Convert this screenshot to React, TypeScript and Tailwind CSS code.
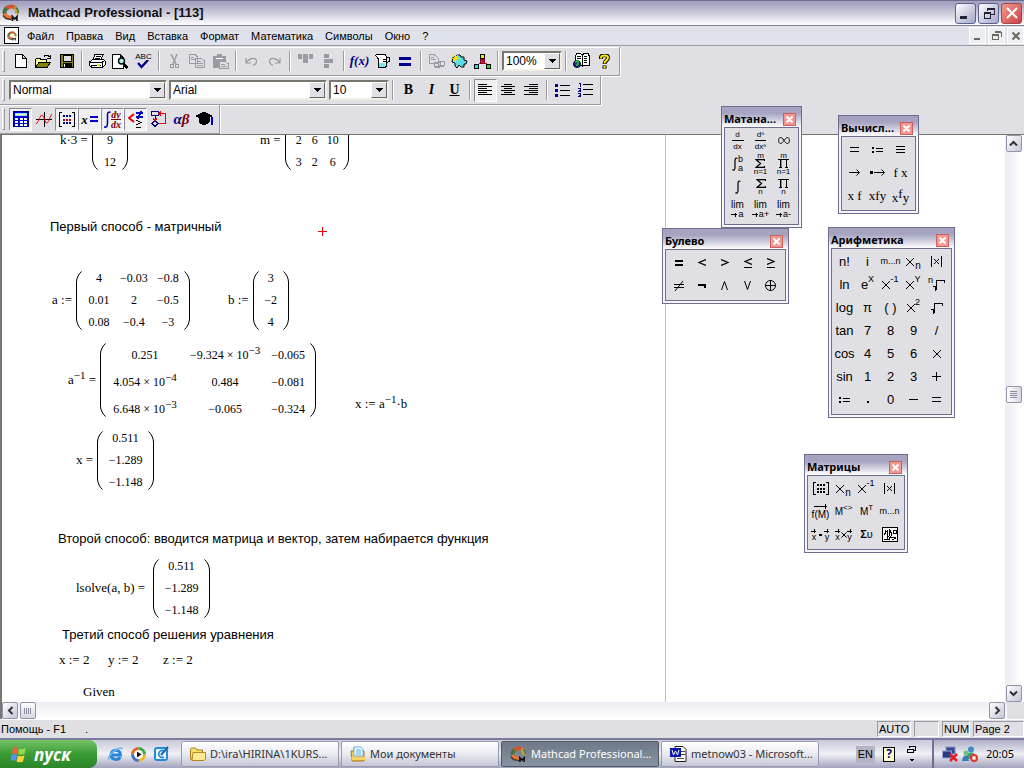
import type { ReactNode } from "react";

const UI = "font-['Noto_Sans','Liberation_Sans',sans-serif]";

function Ico({ children, w = 16, h = 16 }: { children: ReactNode; w?: number; h?: number }) {
  return (
    <svg width={w} height={h} viewBox={`0 0 ${w} ${h}`} fill="none" stroke="#000" shapeRendering="crispEdges" aria-hidden="true">
      {children}
    </svg>
  );
}

function Logo({ size = 18 }: { size?: number }) {
  return (
    <svg width={size} height={size} viewBox="0 0 18 18" fill="none" aria-hidden="true">
      <path d="M3.5 11C1.500 8 3 4.500 6 3.500" stroke="#46733a" strokeWidth="4" />
      <path d="M5 4.500C7 2 11 2 13 4" stroke="#d4552c" strokeWidth="4" />
      <path d="M12 3.500C15 5 15.500 8 14.500 10" stroke="#c9a24a" strokeWidth="4" />
      <path d="M13.500 3.500C16 5 16.500 7 16 9" stroke="#3f7d3c" strokeWidth="1.5" />
      <path d="M2.500 9.500C4 12.500 7 13.500 10 13" stroke="#f0703c" strokeWidth="3.5" />
      <path d="M1 11.500L4 14.500L9.500 15.500" stroke="#4a3323" strokeWidth="1.5" />
      <path d="M10.500 17V12.500L12.700 15L15 12.500V17" stroke="#111" strokeWidth="1.7" />
    </svg>
  );
}

function Tool({ label, on, children }: { label: string; on?: boolean; children: ReactNode }) {
  return (
    <button
      aria-label={label}
      className={
        on
          ? "flex h-[23px] w-[23px] items-center justify-center border border-t-[#8b8a92] border-r-white border-b-white border-l-[#8b8a92] bg-[#f0eff2]"
          : "flex h-[23px] w-[23px] items-center justify-center"
      }
    >
      {children}
    </button>
  );
}

function Sep() {
  return (
    <div className="flex w-2 justify-center">
      <div className="h-5 border-r border-l border-r-white border-l-[#9b9aa2]" />
    </div>
  );
}

function Bar({ children }: { children: ReactNode }) {
  return (
    <div className="flex h-[29px] items-center self-start border-r border-b border-[#9b9aa2] pr-[3px] pl-[2px] shadow-[1px_1px_0_#fff,inset_0_1px_0_#fff]">
      <div className="mr-1 h-[22px] w-[3px] border border-t-white border-r-[#9b9aa2] border-b-[#9b9aa2] border-l-white" />
      {children}
    </div>
  );
}

function Combo({ label, value, width }: { label: string; value: string; width: string }) {
  return (
    <div className={`relative h-[20px] ${width}`}>
      <select
        aria-label={label}
        className="h-full w-full appearance-none border-2 border-t-[#77766f] border-r-[#f1efe2] border-b-[#f1efe2] border-l-[#77766f] bg-white pl-0.5 font-['Liberation_Sans',sans-serif] text-xs leading-4"
      >
        <option>{value}</option>
      </select>
      <span className="pointer-events-none absolute top-[2px] right-[2px] flex h-4 w-4 items-center justify-center border border-t-white border-r-[#66656d] border-b-[#66656d] border-l-white bg-[#e0dfe3]">
        <svg width="7" height="4" shapeRendering="crispEdges"><path d="M0 0H7L3.5 4Z" /></svg>
      </span>
    </div>
  );
}

function Paren({ h, right }: { h: number; right?: boolean }) {
  return (
    <svg width="6" height={h} viewBox={`0 0 6 ${h}`} fill="none" stroke="#000" className={right ? "shrink-0 -scale-x-100" : "shrink-0"}>
      <path d={`M5.5 .5C3 2.5 .5 7 .5 11V${h - 11}C.5 ${h - 7} 3 ${h - 2.5} 5.5 ${h - 0.5}`} />
    </svg>
  );
}

function Matrix({ rows, cols, tall }: { rows: ReactNode[][]; cols: string; tall?: boolean }) {
  return (
    <div className="flex items-center text-xs">
      <Paren h={tall ? 74 : 59} />
      <div className={`grid gap-x-2 px-1 text-center ${cols}`}>
        {rows.flat().map((cell, i) => (
          <span key={i} className={tall ? "h-[27px] pt-[6px] leading-[21px]" : "h-[22px] leading-[22px]"}>{cell}</span>
        ))}
      </div>
      <Paren h={tall ? 74 : 59} right />
    </div>
  );
}

function Region({ at, children }: { at: string; children: ReactNode }) {
  return <div className={`absolute flex items-center gap-1 whitespace-pre ${at}`}>{children}</div>;
}

function Exp({ base, children }: { base: string; children: string }) {
  return (
    <span>
      {base}
      <sup className="-top-[5px] text-[11px] leading-none">{children}</sup>
    </span>
  );
}

const column = [["0.511"], ["−1.289"], ["−1.148"]];

function Palette({ title, at, cols, items }: { title: string; at: string; cols: string; items: [string, ReactNode][] }) {
  return (
    <section aria-label={title} className={`absolute border border-[#6d6c91] bg-[#f7f7fa] ${at}`}>
      <div className="flex h-5 items-center justify-between bg-linear-to-b from-[#a5a3c0] from-30% to-white pr-[5px] pl-[2px]">
        <h2 className="pt-1 text-[11px] leading-4 font-bold">{title}</h2>
        <button aria-label="Закрыть" className="mt-1 flex h-[13px] w-[13px] items-center justify-center border border-[#c9605f] bg-[#f39891]">
          <svg width="7" height="7" stroke="#fff" strokeWidth="2"><path d="M.5 .5L6.5 6.5M6.5 .5L.5 6.5" /></svg>
        </button>
      </div>
      <div className="mx-[2px] mb-[2px] border border-[#6d6c91] bg-[#e0dfe3] pt-px pr-[3px] pb-[3px] pl-px">
        <div className={`grid ${cols}`}>
          {items.map(([name, glyph]) => (
            <button key={name} aria-label={name} className="flex h-[23px] w-[23px] items-center justify-center font-['Liberation_Sans',sans-serif] text-[13px] leading-none whitespace-nowrap">
              {glyph}
            </button>
          ))}
        </div>
      </div>
    </section>
  );
}

const X = <Ico w={8} h={8}><path d="M0 0L8 8M8 0L0 8" shapeRendering="auto" /></Ico>;

function Up({ base, children }: { base: ReactNode; children: ReactNode }) {
  return <span className="flex items-center">{base}<span className="mb-2.5 text-[9px]">{children}</span></span>;
}

function Down({ base, children }: { base: ReactNode; children: ReactNode }) {
  return <span className="flex items-center gap-px">{base}<span className="mt-2 text-[10px]">{children}</span></span>;
}

function Stack({ top, children, bottom }: { top?: string; children: ReactNode; bottom?: string }) {
  return (
    <span className="flex flex-col items-center text-[8px] leading-[7px]">
      {top && <span>{top}</span>}
      {children}
      {bottom && <span>{bottom}</span>}
    </span>
  );
}

const sigma = <Ico w={10} h={9}><path d="M9.5 2V.5H1L5.5 4.5L1 8.5H9.5V7" shapeRendering="auto" strokeWidth="1.3" /></Ico>;
const prod = <Ico w={11} h={9}><path d="M0 .5H11M2.5 1V9M8.5 1V9M1 8.5H4M7 8.5H10" /><path d="M3.5 1V8" stroke="#888" /></Ico>;
const integral = <Ico w={6} h={14}><path d="M5.5 1.5C3.5 0 3 2 3 4V10C3 13 2 14 .5 12.5" shapeRendering="auto" strokeWidth="1.2" /></Ico>;
const toArrow = <Ico w={7} h={5}><path d="M0 2.5H6M4.5 .5V4.5" /></Ico>;
const lim = (sign: string) => (
  <span className="flex flex-col items-center text-[10px] leading-[10px]">
    <span>lim</span>
    <span className="flex items-center text-[9px] leading-[9px]">{toArrow}a{sign}</span>
  </span>
);
const root = <Ico w={12} h={12}><path d="M0 7.5H2.5V11.5M3.5 11V1.5H11.5V4" /></Ico>;
const dots = <Ico w={16} h={13}><path d="M3 .5H.5V12.5H3M13 .5H15.5V12.5H13" /><path d="M4 3H12M4 6.500H12M4 10H12" strokeWidth="2" strokeDasharray="2 1" /></Ico>;
const vec = (c: string) => (
  <span className="flex flex-col items-center text-[9px] leading-[8px]"><Ico w={6} h={4}><path d="M0 2.5H5M3.5 0V4" /></Ico>{c}</span>
);
const range = <span className="text-[9px]">m...n</span>;

const calculus: [string, ReactNode][] = [
  ["Производная", <Stack><span className="w-3 border-b border-black pb-0.5">d</span><span className="pt-0.5">dx</span></Stack>],
  ["Производная n", <Stack><span className="border-b border-black px-0.5 pb-0.5">dⁿ</span><span className="pt-0.5">dxⁿ</span></Stack>],
  ["Бесконечность", <Ico w={12} h={7}><path d="M6 3.5C4.5 1 3.5 .5 2.5 .5C0 .5 0 6.5 2.5 6.5C5 6.5 7 .5 9.5 .5C12 .5 12 6.5 9.5 6.5C8 6.5 7 5 6 3.5" shapeRendering="auto" /></Ico>],
  ["Определённый интеграл", <span className="flex items-center">{integral}<span className="flex flex-col text-[9px] leading-[9px]"><span>b</span><span>a</span></span></span>],
  ["Сумма", <Stack top="m" bottom="n=1">{sigma}</Stack>],
  ["Произведение", <Stack top="m" bottom="n=1">{prod}</Stack>],
  ["Интеграл", integral],
  ["Сумма n", <Stack bottom="n">{sigma}</Stack>],
  ["Произведение n", <Stack bottom="n">{prod}</Stack>],
  ["Предел", lim("")],
  ["Предел справа", lim("+")],
  ["Предел слева", lim("-")],
];

const serif = (s: string) => <span className="font-['Liberation_Serif',serif] text-[13px]">{s}</span>;
const assign = <Ico w={11} h={6}><path d="M0 1H2M0 5H2" strokeWidth="2" /><path d="M4 1.5H11M4 4.5H11" /></Ico>;
const arrow = <Ico w={11} h={7}><path d="M0 3.5H10M7.5 .5L10.5 3.5L7.5 6.5" shapeRendering="auto" /></Ico>;
const equal = <Ico w={9} h={5}><path d="M0 .5H9M0 4.5H9" /></Ico>;

const evaluation: [string, ReactNode][] = [
  ["Равно", equal],
  ["Присвоить", assign],
  ["Тождество", <Ico w={9} h={7}><path d="M0 .5H9M0 3.5H9M0 6.5H9" /></Ico>],
  ["Символьно", arrow],
  ["Символьно с ключом", <span className="flex items-center gap-px"><Ico w={3} h={3}><path d="M0 1.5H3" strokeWidth="3" /></Ico>{arrow}</span>],
  ["f x", serif("f x")],
  ["x f", serif("x f")],
  ["x f y", serif("xfy")],
  ["x^f y", <span className="flex font-['Liberation_Serif',serif] text-[13px] leading-none"><span className="pt-1">x</span><span>f</span><span className="pt-1">y</span></span>],
];

const boolean: [string, ReactNode][] = [
  ["Равно", <Ico w={8} h={6}><path d="M0 1H8M0 5H8" strokeWidth="2" /></Ico>],
  ["Меньше", <Ico w={8} h={7}><path d="M8 .5L1 3.5L8 6.5" shapeRendering="auto" strokeWidth="1.2" /></Ico>],
  ["Больше", <Ico w={8} h={7}><path d="M0 .5L7 3.5L0 6.5" shapeRendering="auto" strokeWidth="1.2" /></Ico>],
  ["Не больше", <Ico w={8} h={10}><path d="M8 .5L1 3.5L8 6.5M0 9.5H8" shapeRendering="auto" strokeWidth="1.2" /></Ico>],
  ["Не меньше", <Ico w={8} h={10}><path d="M0 .5L7 3.5L0 6.5M0 9.5H8" shapeRendering="auto" strokeWidth="1.2" /></Ico>],
  ["Не равно", <Ico w={10} h={10}><path d="M0 3.5H10M0 6.5H10M9 0L1 10" shapeRendering="auto" /></Ico>],
  ["Не", <Ico w={8} h={4}><path d="M0 1H8M7 0V4" strokeWidth="2" /></Ico>],
  ["И", <Ico w={7} h={9}><path d="M.5 9L3.5 .5L6.5 9" shapeRendering="auto" /></Ico>],
  ["Или", <Ico w={7} h={9}><path d="M.5 0L3.5 8.5L6.5 0" shapeRendering="auto" /></Ico>],
  ["Исключающее или", <Ico w={11} h={11}><circle cx="5.5" cy="5.5" r="5" shapeRendering="auto" /><path d="M5.5 0V11M0 5.5H11" /></Ico>],
];

const abs = <Ico w={11} h={11}><path d="M.5 0V11M10.5 0V11" /><path d="M3 3L8 8M8 3L3 8" shapeRendering="auto" /></Ico>;

const arithmetic: [string, ReactNode][] = [
  ["n!", "n!"], ["i", "i"], ["m..n", range], ["x n", <Down base={X}>n</Down>], ["|x|", abs],
  ["ln", "ln"], ["e^x", <Up base="e">X</Up>], ["x^-1", <Up base={X}>-1</Up>], ["x^y", <Up base={X}>Y</Up>], ["Корень n", <span className="flex items-center"><span className="mb-2 text-[9px]">n</span>{root}</span>],
  ["log", "log"], ["π", "π"], ["( )", "( )"], ["x^2", <Up base={X}>2</Up>], ["Корень", root],
  ["tan", "tan"], ["7", "7"], ["8", "8"], ["9", "9"], ["/", "/"],
  ["cos", "cos"], ["4", "4"], ["5", "5"], ["6", "6"], ["×", X],
  ["sin", "sin"], ["1", "1"], ["2", "2"], ["3", "3"], ["+", <Ico w={9} h={9}><path d="M0 4.5H9M4.5 0V9" /></Ico>],
  [":=", assign], [".", <Ico w={2} h={6}><path d="M0 5H2" strokeWidth="2" /></Ico>], ["0", "0"], ["−", <Ico w={9} h={2}><path d="M0 .5H9" /></Ico>], ["=", equal],
];

const matrices: [string, ReactNode][] = [
  ["Матрица", dots], ["x n", <Down base={X}>n</Down>], ["x^-1", <Up base={X}>-1</Up>], ["|x|", abs],
  ["Векторизация", <span className="flex flex-col items-center text-[10px] leading-[11px]"><Ico w={14} h={5}><path d="M0 2.5H13M11.5 0V5" /></Ico>f(M)</span>],
  ["Столбец", <span className="flex items-center text-[10px]">M<span className="mb-2 text-[8px]">&lt;&gt;</span></span>],
  ["Транспонировать", <span className="flex items-center text-[10px]">M<span className="mb-2 text-[8px]">T</span></span>],
  ["m..n", range],
  ["Скалярное", <span className="flex items-center gap-0.5">{vec("x")}<Ico w={3} h={2}><path d="M0 1H3" strokeWidth="2" /></Ico>{vec("y")}</span>],
  ["Векторное", <span className="flex items-center">{vec("x")}<Ico w={6} h={6}><path d="M.5 .5L5.500 5.500M5.500 .5L.5 5.500" shapeRendering="auto" /></Ico>{vec("y")}</span>],
  ["Сумма вектора", <span className="text-[11px]"><b>Σ</b>υ</span>],
  ["Картинка", <Ico w={16} h={15}><path d="M.5 .5H15.5V14.5H.5Z" fill="#f4f4f4" /><path d="M2 8L5 4V13M7 2V9L5 11M8 3L10 8L7 12M11 3H14V6H11ZM8 10H14M10 13L14 11M2 12H8M3 3V6" /></Ico>],
];

const menus = ["Файл", "Правка", "Вид", "Вставка", "Формат", "Математика", "Символы", "Окно", "?"];

const grey = "#9b9aa2";
const lines = (xs: number[][]) => <Ico w={15} h={13}>{xs.map(([a, b], i) => <path key={i} d={`M${a} ${i * 2 + 0.5}H${b}`} />)}</Ico>;

function CaptionButton({ label, red, children }: { label: string; red?: boolean; children: ReactNode }) {
  return (
    <button
      aria-label={label}
      className={
        red
          ? "flex h-[21px] w-[21px] items-center justify-center rounded-[3px] border border-[#9c4650] bg-linear-to-br from-[#ef9a90] to-[#cc3f45]"
          : "flex h-[21px] w-[21px] items-center justify-center rounded-[3px] border border-[#5c6090] bg-linear-to-br from-white to-[#a3a6c8]"
      }
    >
      {children}
    </button>
  );
}

function ChildButton({ label, children }: { label: string; children: ReactNode }) {
  return (
    <button aria-label={label} className="flex h-[17px] w-[17px] items-center justify-center border border-white bg-[#eceef0]">
      {children}
    </button>
  );
}

function ScrollButton({ label, d }: { label: string; d: string }) {
  return (
    <button aria-label={label} className="flex h-[17px] w-4 shrink-0 items-center justify-center rounded-[2px] border border-[#9394a8] bg-linear-to-br from-white to-[#c5c6d8]">
      <svg width="9" height="9" fill="none" stroke="#333" strokeWidth="2"><path d={d} /></svg>
    </button>
  );
}

function StatusCell({ width, children }: { width: string; children?: string }) {
  return (
    <span className={`h-4 border border-t-[#9b9aa2] border-r-white border-b-white border-l-[#9b9aa2] pl-px leading-[14px] ${width}`}>{children}</span>
  );
}

function Task({ icon, active, children }: { icon: ReactNode; active?: boolean; children: string }) {
  return (
    <button
      className={
        active
          ? "flex h-[26px] w-[158px] items-center gap-1 rounded-[2px] border border-[#505866] bg-linear-to-b from-[#6f7988] to-[#8793a1] px-2 text-white"
          : "flex h-[26px] w-[158px] items-center gap-1 rounded-[2px] border border-[#9a9bb2] bg-linear-to-b from-white via-[#e9e9f0] to-[#c6c7d6] px-2 text-[#333]"
      }
    >
      <span className="shrink-0">{icon}</span>
      <span className="whitespace-nowrap">{children}</span>
    </button>
  );
}

export default function App() {
  return (
    <div className={`relative flex h-screen flex-col overflow-hidden bg-[#e0dfe3] text-[11px] text-black ${UI}`}>
      <header className="flex h-[26px] shrink-0 items-center gap-2 border-t border-b border-t-[#6d6c91] border-b-[#7f809c] bg-linear-to-b from-[#a5a3c0] from-10% to-white pr-0.5 pl-0.5">
        <Logo />
        <h1 className="font-['Liberation_Sans',sans-serif] text-[13px] font-bold text-[#111]">Mathcad Professional - [113]</h1>
        <div className="ml-auto flex gap-0.5">
          <CaptionButton label="Свернуть"><Ico w={14} h={14}><path d="M1 11H8" stroke="#223" strokeWidth="3" /></Ico></CaptionButton>
          <CaptionButton label="Восстановить"><Ico w={12} h={12}><path d="M4 4V1H11V7H8M1.5 5H7.5V11H1.5Z" stroke="#223" /><path d="M1 5.5H8M4 1.5H11" stroke="#223" strokeWidth="2" /></Ico></CaptionButton>
          <CaptionButton label="Закрыть" red><svg width="12" height="12" stroke="#fff" strokeWidth="2"><path d="M1 1L11 11M11 1L1 11" /></svg></CaptionButton>
        </div>
      </header>

      <nav className="flex h-5 shrink-0 items-center border-b border-[#9b9aa2] bg-[#dfe1eb] pl-1">
        <div className="flex h-[17px] w-[15px] items-center justify-center border border-black bg-white"><Logo size={10} /></div>
        <div className="ml-0.5 flex">
          {menus.map((m) => <button key={m} className="px-[6px] font-['Liberation_Sans',sans-serif] text-[11px] leading-4">{m}</button>)}
        </div>
        <div className="ml-auto flex gap-0.5">
          <ChildButton label="Свернуть документ"><Ico w={8} h={8}><path d="M0 7H6" stroke="#6a6960" strokeWidth="2" /></Ico></ChildButton>
          <ChildButton label="Восстановить документ"><Ico w={10} h={9}><path d="M3 1H9V6M.5 4V8.5H6.5V4" stroke="#6a6960" /><path d="M0 4H7M3 1H9" stroke="#6a6960" strokeWidth="2" /></Ico></ChildButton>
          <ChildButton label="Закрыть документ"><svg width="8" height="8" stroke="#6a6960" strokeWidth="2"><path d="M.5 .5L7.5 7.5M7.5 .5L.5 7.5" /></svg></ChildButton>
        </div>
      </nav>

      <div className="flex h-[88px] shrink-0 flex-col pt-px">
        <Bar>
          <Tool label="Создать"><Ico w={12} h={14}><path d="M.5 .5H7.5L11.5 4.5V13.5H.5ZM7.5 .5V4.5H11.5" fill="#fff" /></Ico></Tool>
          <Tool label="Открыть"><Ico w={17} h={15}><path d="M.5 13.5V5.5L2 4.5H5L6 5.5H11.5V8" fill="#ffff9c" /><path d="M.5 13.5L4 8.5H15.5L12 13.5Z" fill="#84840a" /><path d="M9 2.5C11 .5 13 .5 14.5 3M15.5 .5V4.5H12" /></Ico></Tool>
          <Tool label="Сохранить"><Ico w={14} h={14}><path d="M.5 .5H13.5V13.5H.5Z" fill="#84840a" /><path d="M3 1H11V7H3Z" fill="#e0dfe3" /><path d="M3 9H11V13H3Z" fill="#000" /><path d="M4.5 10V13" stroke="#fff" /></Ico></Tool>
          <Sep />
          <Tool label="Печать"><Ico w={17} h={15}><path d="M4 6L6 .5H14L12 6" fill="#fff" /><path d="M7 2.5H12M6 4.5H11" /><path d="M.5 8L4 5.5H14.5L16 7V11L13 13.5H3L.5 11.5Z" fill="#fff" /><path d="M.5 8.5H13L16 6M13 8.5V13M2 11.5H12" /><path d="M8 10.5H11" stroke="#eeee00" strokeWidth="2" /></Ico></Tool>
          <Tool label="Просмотр"><Ico w={17} h={15}><path d="M.5 .5H8L11.5 4V14H.5ZM8 .5V4.5H11" fill="#fff" /><circle cx="9.5" cy="7" r="3" fill="#a8f4f4" shapeRendering="auto" strokeWidth="1.4" /><path d="M11.5 10L15.5 14" strokeWidth="3" /></Ico></Tool>
          <Tool label="Орфография">
            <span className="flex flex-col items-center font-['Liberation_Sans',sans-serif] text-[8px] leading-[7px]">ABC<Ico w={12} h={9}><path d="M1 3L4.5 7L11 0" stroke="#00008b" strokeWidth="2.4" shapeRendering="auto" /></Ico></span>
          </Tool>
          <Sep />
          <Tool label="Вырезать"><Ico w={11} h={15}><path d="M2 0L7 10M8 0L4 10" stroke={grey} strokeWidth="1.5" shapeRendering="auto" /><path d="M1.5 10.5H4.5V13.5H1.5ZM6.5 10.5H9.5V13.5H6.5Z" stroke={grey} /></Ico></Tool>
          <Tool label="Копировать"><Ico w={17} h={14}><path d="M.5 .5H6L8.5 3V9.5H.5ZM6.5 4.5H12L15.5 7V13.5H6.5ZM2 3.5H5M2 5.5H6M8 7.5H12M8 9.5H14M8 11.5H14" stroke={grey} /></Ico></Tool>
          <Tool label="Вставить"><Ico w={16} h={15}><path d="M.5 2.5H12.5V13.5H.5Z" fill={grey} stroke={grey} /><path d="M4 1.5H9" stroke={grey} strokeWidth="3" /><path d="M3 4.5H10" stroke="#fff" /><path d="M6.5 7.5H12L15.5 10V14.5H6.5Z" fill="#e0dfe3" stroke={grey} /><path d="M8 10.5H12M8 12.5H14" stroke={grey} /></Ico></Tool>
          <Sep />
          <Tool label="Отменить"><Ico w={13} h={9}><path d="M1 1V6H6M1 6C4 1 10 0 11.5 3.5C12 6 10 8 8 8" stroke={grey} shapeRendering="auto" strokeWidth="1.2" /></Ico></Tool>
          <Tool label="Повторить"><Ico w={13} h={9}><path d="M12 1V6H7M12 6C9 1 3 0 1.5 3.5C1 6 3 8 5 8" stroke={grey} shapeRendering="auto" strokeWidth="1.2" /></Ico></Tool>
          <Sep />
          <Tool label="Выровнять по горизонтали"><Ico w={15} h={14}><path d="M0 2.500H4M11 2.500H15" stroke={grey} strokeWidth="5" /><path d="M5 4.500H10" stroke={grey} strokeWidth="9" /></Ico></Tool>
          <Tool label="Выровнять по вертикали"><Ico w={10} h={14}><path d="M0 2H5M0 7H9M0 12H5" stroke={grey} strokeWidth="4" /></Ico></Tool>
          <Sep />
          <Tool label="Функция"><span className="font-['Liberation_Serif',serif] text-[13px] font-bold text-[#00008b] italic">f(x)</span></Tool>
          <Tool label="Единицы"><Ico w={15} h={14}><path d="M.5 1.5L3 4.5V12L4 13.5H10L11.5 12V2.5L10 .5H2Z" fill="#fff" /><path d="M12 3.5H14.5V7L12 9M8 5.5H11M8 7.5H11" /><path d="M4 10.5H10" stroke="#75e6e8" strokeWidth="4" /></Ico></Tool>
          <Tool label="Вычислить"><Ico w={13} h={9}><path d="M0 1.500H12M0 7.500H12" stroke="#00008b" strokeWidth="3" /></Ico></Tool>
          <Sep />
          <Tool label="Гиперссылка"><Ico w={16} h={14}><path d="M.5 .5H5L9.500 4.500V9H.5ZM2 3.5H5M2 5.5H7M5.5 8.5H11.5V12.5H5.5ZM9.5 7.5H15.5V11.5H9.5Z" stroke={grey} /><path d="M6 12.5H11M10 11.5H15" stroke={grey} strokeWidth="2" /></Ico></Tool>
          <Tool label="Компонент"><Ico w={17} h={15}><path d="M2 3H5L6 1H9L10 3H13V6L16 7L15 10H13V13H10L8 11L6 14L4 12V9L1 8Z" fill="#58dce2" shapeRendering="auto" /><path d="M1 1L7 7M7 1L2 8M4 0V9M0 4.5H9" stroke="#ffe600" /></Ico></Tool>
          <Tool label="MathConnex"><Ico w={17} h={15}><path d="M8.5 4V7L3 11.5M9 7L14 11.5" stroke="#c01030" /><path d="M6.5 .5H10.5V4.5H6.5Z" fill="#ffee00" /><circle cx="8.5" cy="7.5" r="2.2" fill="#d01030" stroke="#80001a" /><path d="M.5 10.5H4.5V14.5H.5Z" fill="#20dfe8" /><path d="M12.5 10.5H16.5V14.5H12.5Z" fill="#20d820" /></Ico></Tool>
          <Sep />
          <Combo label="Масштаб" value="100%" width="w-[60px]" />
          <Sep />
          <Tool label="Ресурсы"><Ico w={17} h={16}><path d="M2.5 2.5L4 .5H7.5L9.5 2L11 .5H15L16 2.5V12H10L9.5 13L8 12H3Z" fill="#fff" /><path d="M9.5 2V12M4 3.5H8M4 5.5H8M11 3.5H14M11 5.5H14M11 7.5H14M11 9.5H14" /><circle cx="4" cy="11" r="3.5" fill="#1020c0" shapeRendering="auto" /><path d="M2 9L5 8V11L3 13" stroke="#20a040" strokeWidth="2" /></Ico></Tool>
          <Tool label="Справка"><svg width="12" height="15" fill="none"><path d="M2 5V3.5C2 0 9 0 9 3.5C9 6.5 5.5 6.5 5.5 10M5.5 11.5V14.5" stroke="#000" strokeWidth="4" /><path d="M2 4.5V3.5C2 .8 9 .8 9 3.5C9 6.5 5.5 6.5 5.5 9.5M5.5 12V14" stroke="#ffee00" strokeWidth="2" /></svg></Tool>
        </Bar>
        <Bar>
          <div className="flex gap-0.5">
            <Combo label="Стиль" value="Normal" width="w-[158px]" />
            <Combo label="Шрифт" value="Arial" width="w-[158px]" />
            <Combo label="Размер" value="10" width="w-[60px]" />
          </div>
          <Sep />
          <Tool label="Полужирный"><span className="font-['Liberation_Serif',serif] text-sm font-bold">B</span></Tool>
          <Tool label="Курсив"><span className="font-['Liberation_Serif',serif] text-sm font-bold italic">I</span></Tool>
          <Tool label="Подчёркнутый"><span className="font-['Liberation_Serif',serif] text-sm font-bold underline">U</span></Tool>
          <Sep />
          <Tool label="По левому краю" on>{lines([[0, 9], [0, 14], [0, 9], [0, 14], [0, 9], [0, 14]])}</Tool>
          <Tool label="По центру">{lines([[3, 11], [0, 14], [3, 11], [0, 14], [3, 11], [0, 14]])}</Tool>
          <Tool label="По правому краю">{lines([[5, 14], [0, 14], [5, 14], [0, 14], [5, 14], [0, 14]])}</Tool>
          <Sep />
          <Tool label="Маркеры"><Ico w={15} h={13}><path d="M0 1.5H3M0 6.5H3M0 11.5H3" stroke="#00008b" strokeWidth="3" /><path d="M5 1.5H15M5 6.5H15M5 11.5H15" /></Ico></Tool>
          <Tool label="Нумерация"><Ico w={15} h={14}><path d="M1 .5H2.5V3.5M0 5.5H2.5V7L.5 8.5H3M0 10.5H2.5V13.5H0M1 12H3" stroke="#00008b" /><path d="M5 1.5H15M5 6.5H15M5 11.5H15" /></Ico></Tool>
        </Bar>
        <Bar>
          <Tool label="Калькулятор" on><Ico w={16} h={16}><path d="M.5 .5H15.5V15.5H.5Z" fill="#0000d0" stroke="#000080" /><path d="M2 3.5H14" stroke="#8fe6f0" strokeWidth="3" /><path d="M3 3.5H12" stroke="#fff0a0" /><path d="M2 8H14M2 11H14M2 14H14" stroke="#fff" strokeWidth="2" strokeDasharray="3 1.5" /></Ico></Tool>
          <Tool label="График"><Ico w={16} h={15}><path d="M0 7.5H16M8.5 0V15" /><path d="M0 12C3 10 4 3 6 3C8 3 9 12 11 11C13 10 14 4 16 2" stroke="#e00000" shapeRendering="auto" /></Ico></Tool>
          <Tool label="Матрицы" on><Ico w={16} h={15}><path d="M3 .5H.5V14.5H3M13 .5H15.5V14.5H13" /><path d="M4 4H12M4 11H12" stroke="#00008b" strokeWidth="2" strokeDasharray="2 1" /><path d="M4 7.500H12" stroke="#a00020" strokeWidth="2" strokeDasharray="2 1" /></Ico></Tool>
          <Tool label="Вычисления" on><span className="flex items-center gap-0.5 font-['Liberation_Serif',serif] text-[13px] leading-none font-bold italic">x<Ico w={8} h={6}><path d="M0 1H8M0 5H8" stroke="#0000d0" strokeWidth="2" /></Ico></span></Tool>
          <Tool label="Матанализ" on>
            <span className="flex items-center">
              <Ico w={7} h={17}><path d="M6.5 1.5C3.5 0 3.5 3 3.5 5V12C3.5 16 2 17 0 15.5" stroke="#0000b0" shapeRendering="auto" strokeWidth="1.5" /></Ico>
              <span className="flex flex-col text-center font-['Liberation_Serif',serif] text-[10px] leading-[9px] font-bold text-[#800000] italic"><span className="border-b border-[#800000]">dy</span><span>dx</span></span>
            </span>
          </Tool>
          <Tool label="Булево" on><Ico w={16} h={17}><path d="M6 3L1 7L6 11" stroke="#f00000" strokeWidth="2" shapeRendering="auto" /><path d="M8 2H15M8 6H15M13 0L10 8" stroke="#0000c0" strokeWidth="2" /><path d="M8 9L13 11.5L8 14M8 16.5H13" /></Ico></Tool>
          <Tool label="Программирование"><Ico w={16} h={17}><path d="M.5 .5H7.5V4.5H.5ZM4 5V10M4 9.5L7 12.5L4 15.5L1 12.5Z" stroke="#000080" /><path d="M8 12.5H14.5V2.5H8M10 .5L8 2.5L10 4.5M2 7.5L4 9.5L6 7.5" stroke="#f00000" /></Ico></Tool>
          <Tool label="Греческий"><span className="font-['Liberation_Serif',serif] text-[15px] leading-none font-bold text-[#800000] italic"><span className="text-[#00008b]">α</span>β</span></Tool>
          <Tool label="Символика"><Ico w={17} h={15}><path d="M0 4L8 0L16 4L8 8Z" fill="#000" /><path d="M3 6V10L7 12.5H9L13 10V6L8 9Z" fill="#000" /><path d="M15.5 5V13" stroke="#0000d0" strokeWidth="2" /></Ico></Tool>
        </Bar>
      </div>

      <main className="flex min-h-0 flex-1 border-t border-l-2 border-[#77766f] bg-white pr-0.5">
        <div className="relative min-w-0 flex-1 overflow-hidden bg-white font-['Liberation_Serif',serif] text-[13px] leading-4">
          <div className="absolute top-0 bottom-0 left-[663px] w-px bg-[#c0c0c0]" />
          <Region at="top-[-28px] left-[58px]"><span>k·3 =</span><Matrix cols="grid-cols-[16px]" rows={[[""], ["9"], ["12"]]} /></Region>
          <Region at="top-[-28px] left-[258px]"><span>m =</span><Matrix cols="grid-cols-[8px_8px_12px]" rows={[["", "", ""], ["2", "6", "10"], ["3", "2", "6"]]} /></Region>
          <Region at="top-[84px] left-[48px] font-['Liberation_Sans',sans-serif]">Первый способ - матричный</Region>
          <div className="absolute top-[92px] left-[316px]"><Ico w={9} h={9}><path d="M0 4.5H9M4.5 0V9" stroke="#f00000" /></Ico></div>
          <Region at="top-[132px] left-[50px]"><span>a :=</span><Matrix cols="grid-cols-[26px_28px_24px]" rows={[["4", "−0.03", "−0.8"], ["0.01", "2", "−0.5"], ["0.08", "−0.4", "−3"]]} /></Region>
          <Region at="top-[132px] left-[226px]"><span>b :=</span><Matrix cols="grid-cols-[16px]" rows={[["3"], ["−2"], ["4"]]} /></Region>
          <Region at="top-[204px] left-[66px]">
            <span><Exp base="a">−1</Exp> =</span>
            <Matrix
              tall
              cols="grid-cols-[70px_74px_36px]"
              rows={[
                ["0.251", <Exp base="−9.324 × 10">−3</Exp>, "−0.065"],
                [<Exp base="4.054 × 10">−4</Exp>, "0.484", "−0.081"],
                [<Exp base="6.648 × 10">−3</Exp>, "−0.065", "−0.324"],
              ]}
            />
          </Region>
          <Region at="top-[261px] left-[353px]"><span>x := <Exp base="a">−1</Exp>·b</span></Region>
          <Region at="top-[292px] left-[74px]"><span>x =</span><Matrix cols="grid-cols-[37px]" rows={column} /></Region>
          <Region at="top-[396px] left-[56px] font-['Liberation_Sans',sans-serif]">Второй способ: вводится матрица и вектор, затем набирается функция</Region>
          <Region at="top-[420px] left-[74px] gap-2"><span>lsolve(a, b) =</span><Matrix cols="grid-cols-[37px]" rows={column} /></Region>
          <Region at="top-[492px] left-[60px] font-['Liberation_Sans',sans-serif]">Третий способ решения уравнения</Region>
          <Region at="top-[517px] left-[57px]">x := 2</Region>
          <Region at="top-[517px] left-[106px]">y := 2</Region>
          <Region at="top-[517px] left-[161px]">z := 2</Region>
          <Region at="top-[549px] left-[81px]">Given</Region>
        </div>
        <div className="flex w-[17px] flex-col items-center bg-linear-to-r from-[#ececf3] to-white">
          <ScrollButton label="Вверх" d="M1 6.5L4.5 3L8 6.5" />
          <div className="flex-1" />
          <button aria-label="Ползунок" className="flex h-[17px] w-4 items-center justify-center rounded-[2px] border border-[#9394a8] bg-linear-to-r from-white to-[#d5d6e2]"><Ico w={7} h={8}><path d="M0 .5H7M0 2.5H7M0 4.5H7M0 6.5H7" stroke="#8a8b9c" /></Ico></button>
          <div className="h-[282px]" />
          <ScrollButton label="Вниз" d="M1 2.5L4.5 6L8 2.5" />
        </div>
      </main>

      <div className="flex h-[17px] shrink-0 gap-0.5 border-l-2 border-[#77766f] bg-linear-to-b from-[#ececf3] to-white">
        <ScrollButton label="Влево" d="M6.5 1L3 4.5L6.5 8" />
        <button aria-label="Ползунок" className="flex h-[17px] w-4 items-center justify-center rounded-[2px] border border-[#9394a8] bg-linear-to-b from-white to-[#d5d6e2]"><Ico w={8} h={6}><path d="M.5 0V6M2.5 0V6M4.5 0V6M6.5 0V6" stroke="#8a8b9c" /></Ico></button>
        <div className="flex-1" />
        <ScrollButton label="Вправо" d="M2.5 1L6 4.5L2.5 8" />
        <div className="w-[17px] bg-[#e0dfe3]" />
      </div>

      <footer className="flex h-[19px] shrink-0 items-center gap-[3px] border-t border-white pl-px font-['Liberation_Sans',sans-serif] text-[11px] leading-4">
        <span>Помощь - F1</span>
        <span className="ml-4">.</span>
        <span className="flex-1" />
        <StatusCell width="w-[34px]">AUTO</StatusCell>
        <StatusCell width="w-[25px]" />
        <StatusCell width="w-[28px]">NUM</StatusCell>
        <StatusCell width="w-[51px]">Page 2</StatusCell>
      </footer>

      <div className="flex h-[30px] shrink-0 items-center border-t-2 border-[#7b7c9c] bg-linear-to-b from-[#c8c8d8] via-[#f1f1f6] to-[#a2a3bd]">
        <button className="flex h-7 w-[97px] items-center gap-1.5 rounded-r-lg bg-linear-to-b from-[#74c265] via-[#3a9c35] to-[#2a8527] pl-2.5 font-['Open_Sans','Liberation_Sans',sans-serif] text-[17px] leading-none font-bold text-white italic">
          <svg width="18" height="17" aria-hidden="true"><path d="M3 2Q5 .5 8 2L7 8Q4 6.5 2 8Z" fill="#f0643c" /><path d="M9 2.5Q12 4 16 2L14.5 8Q11 9.5 8 8Z" fill="#8fd84a" /><path d="M1.5 9Q4 7.5 7 9L6 15Q3 13.5 .5 15Z" fill="#5b8ff0" /><path d="M8 9.5Q11 11 14.5 9.5L13 15.5Q10 17 6.5 15.5Z" fill="#fbd23c" /></svg>
          пуск
        </button>
        <div className="flex w-[84px] items-center justify-center gap-2">
          <button aria-label="Internet Explorer"><svg width="15" height="15" fill="none"><path d="M3 8H12.5C12.5 1.5 3 1.5 3 8C3 13.5 11 13.5 12 10" stroke="#2a86d8" strokeWidth="3" /><path d="M1 13C-1 8 12 -2 14.5 2" stroke="#6db8ee" strokeWidth="1.5" /></svg></button>
          <button aria-label="Проигрыватель"><svg width="15" height="15"><path d="M7.5 7.5V0A7.5 7.5 0 0 0 0 7.5Z" fill="#e8642a" /><path d="M7.5 7.5H15A7.5 7.5 0 0 0 7.5 0Z" fill="#3fa848" /><path d="M7.5 7.5V15A7.5 7.5 0 0 0 15 7.5Z" fill="#f2b622" /><path d="M7.5 7.5H0A7.5 7.5 0 0 0 7.5 15Z" fill="#3a6fd0" /><circle cx="7.5" cy="7.5" r="4.5" fill="#fff" /><path d="M6 4.5L10.5 7.5L6 10.5Z" fill="#111" /></svg></button>
          <button aria-label="Рабочий стол"><svg width="16" height="16" fill="none"><rect x="1" y="2" width="12" height="12" rx="2" fill="#eef7ff" stroke="#2389d8" strokeWidth="2" /><path d="M10 5A3.5 3.5 0 1 0 10 11" stroke="#2389d8" strokeWidth="1.5" /><path d="M7 9L14 1" stroke="#2266a8" strokeWidth="2" /></svg></button>
        </div>
        <div className="flex gap-0.5">
          <Task icon={<svg width="16" height="14"><path d="M.5 2.5Q.5 1 2 1H5.5L7 3H12.5V6H4L1.5 13Q.5 13 .5 11Z" fill="#f7dd74" stroke="#a8821c" /><path d="M3 5.5H15.5V12L14 13.5H2Z" fill="#ffeb94" stroke="#b08a20" /></svg>}>D:\ira\HIRINA\1KURS...</Task>
          <Task icon={<svg width="16" height="16"><path d="M1 5H4V2H9L14 5V15H2Z" fill="#f3c64c" stroke="#a67918" /><path d="M4 1H11L13 3V10H4Z" fill="#f2faff" stroke="#6fb0df" /><path d="M6 4H11M6 6H11M6 8H11" stroke="#5aa8dd" /><path d="M1 11H15V14H2Z" fill="#f8d263" /></svg>}>Мои документы</Task>
          <Task active icon={<Logo size={17} />}>Mathcad Professional...</Task>
          <Task icon={<svg width="17" height="16"><path d="M5 .5H13L16 3.5V15.5H5Z" fill="#fff" stroke="#222" /><path d="M11 5.5H15M11 8.5H15M7 12.5H14" stroke="#444" /><rect y="2" width="11" height="9" fill="#0a16b0" /><path d="M2 4L3.5 9L5.5 5L7.5 9L9 4" stroke="#fff" fill="none" /></svg>}>metnow03 - Microsoft...</Task>
        </div>
        <div className="ml-auto flex items-center gap-3 pr-4">
          <div className="flex items-center gap-2">
            <button className="h-[17px] bg-[#b4b4c6] px-0.5 font-['Liberation_Sans',sans-serif] text-[11px] leading-4">EN</button>
            <button aria-label="Справка по языку" className="flex h-[15px] w-3 items-center justify-center border border-black bg-[#ffffcf] text-xs leading-none font-bold text-[#000090]">?</button>
          </div>
          <button aria-label="Параметры панели"><Ico w={9} h={16}><path d="M2.5 2V.5H8.5V4.5H6M.5 3.5H6.5V6.5H.5ZM0 3.5H7" /><path d="M2 13H7L4.5 15.5Z" fill="#000" stroke="none" /></Ico></button>
        </div>
        <div className="flex h-7 w-[92px] items-center gap-1 border-l-2 border-[#6f7093] bg-linear-to-b from-[#adaec6] via-[#eeeef4] to-[#a2a3bd] pl-2">
          <svg width="16" height="16"><rect x="4" y="1" width="9" height="7" fill="#33478e" stroke="#8693c2" /><rect x=".5" y="5" width="9" height="7" fill="#273c82" stroke="#9aa6cf" /><path d="M8 8L15 15M15 8L8 15" stroke="#e02028" strokeWidth="2.5" /></svg>
          <svg width="16" height="16"><circle cx="9" cy="3.5" r="3" fill="#3f8cc8" /><path d="M5 13Q4 6 9 6.5Q13 6 14 12Z" fill="#3aa06c" /><circle cx="4" cy="7" r="2.5" fill="#70bd86" /><path d="M0 15Q1 8 6 10L7 15Z" fill="#357fbb" /><circle cx="12" cy="12" r="4" fill="#e0372c" /><path d="M10.5 10.5L13.5 13.5M13.5 10.5L10.5 13.5" stroke="#fff" strokeWidth="1.5" /></svg>
          <time className="ml-1 text-[11px]">20:05</time>
        </div>
      </div>

      <Palette title="Матана..." at="top-[106px] left-[721px]" cols="grid-cols-3" items={calculus} />
      <Palette title="Вычисл..." at="top-[115px] left-[838px]" cols="grid-cols-3" items={evaluation} />
      <Palette title="Булево" at="top-[228px] left-[662px]" cols="grid-cols-5" items={boolean} />
      <Palette title="Арифметика" at="top-[227px] left-[828px]" cols="grid-cols-5" items={arithmetic} />
      <Palette title="Матрицы" at="top-[454px] left-[804px]" cols="grid-cols-4" items={matrices} />
    </div>
  );
}
